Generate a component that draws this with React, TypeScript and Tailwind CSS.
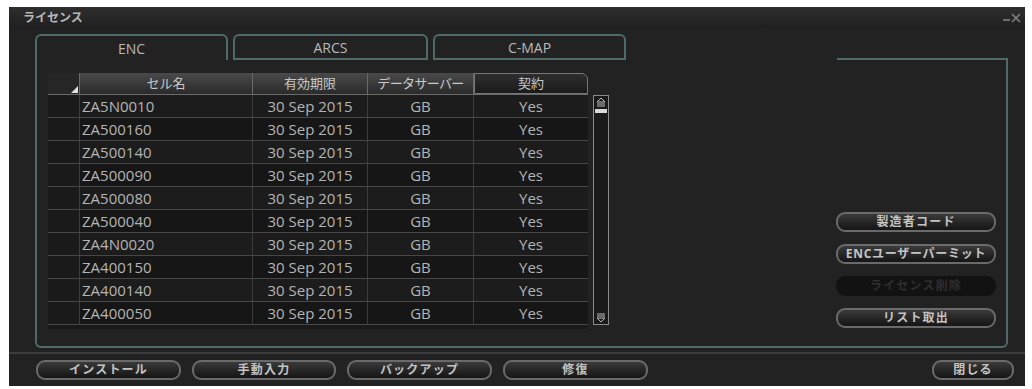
import React from 'react';

type Row = { cell: string, date: string, server: string, contract: string }

const rows: Array<Row> = [
  'ZA5N0010', 'ZA500160', 'ZA500140', 'ZA500090', 'ZA500080',
  'ZA500040', 'ZA4N0020', 'ZA400150', 'ZA400140', 'ZA400050',
].map((cell) => ({ cell, date: '30 Sep 2015', server: 'GB', contract: 'Yes' }))

const font = { fontFamily: '"Open Sans", "Noto Sans CJK JP", sans-serif' }

const PillButton = (props: { label: string, className?: string, disabled?: boolean }) => {
  const base = 'h-[20px] flex items-center justify-center rounded-[9px] text-[12px] font-bold whitespace-nowrap overflow-hidden'
  const normal = ' border-2 border-[#6a6a6a] bg-gradient-to-b from-[#3a3a3a] to-[#151515] text-[#c4c4c4]'
  const disabled = ' bg-[#121212] text-[#2e2e2e]'
  return <div className={base + (props.disabled ? disabled : normal) + ' ' + (props.className ?? '')}>
    {props.label}
  </div>
}

const TableHeader = () => {
  const cell = 'h-[21px] flex items-center justify-center text-[13px] text-[#c8c8c8] border-r border-[#6a6a6a] bg-gradient-to-b from-[#4a4a4a] to-[#2a2a2a]'
  return <div className="flex border-b border-[#6a6a6a]">
    <div className="w-[32px] h-[21px] relative bg-[#262626] border-r border-[#6a6a6a]">
      <div className="absolute right-[1px] bottom-[1px] w-0 h-0 border-l-[7px] border-l-transparent border-b-[7px] border-b-[#e0e0e0]" />
    </div>
    <div className={cell + ' w-[173px]'}>セル名</div>
    <div className={cell + ' w-[115px]'}>有効期限</div>
    <div className={cell + ' w-[106px] tracking-tighter'}>データサーバー</div>
    <div className="h-[21px] w-[114px] flex items-center justify-center text-[13px] text-[#c8c8c8] bg-gradient-to-b from-[#2e2e2e] to-[#1a1a1a] border border-[#777] rounded-tr-[6px]">契約</div>
  </div>
}

const TableRow = (props: { row: Row, index: number }) => {
  const bg = props.index % 2 === 0 ? 'bg-[#1c1c1c]' : 'bg-[#161616]'
  const cell = 'h-[22px] flex items-center text-[15px] text-[#b4b4b4] border-r border-[#3c3c3c]'
  return <div className={'flex border-b border-[#474747] ' + bg}>
    <div className="w-[32px] h-[22px] border-r border-[#3c3c3c] bg-[#1a1a1a]" />
    <div className={cell + ' w-[173px] pl-[2px]'}>{props.row.cell}</div>
    <div className={cell + ' w-[115px] justify-center'}>{props.row.date}</div>
    <div className={cell + ' w-[106px] justify-center'}>{props.row.server}</div>
    <div className={cell + ' w-[114px] justify-center border-r-0'}>{props.row.contract}</div>
  </div>
}

const ScrollBar = () => {
  return <div className="w-[16px] h-[230px] mt-[22px] ml-[5px] border border-[#8a8a8a] bg-[#1a1a1a] flex flex-col items-center justify-between py-[2px]">
    <div className="flex flex-col items-center gap-[2px]">
      <svg width="10" height="9" viewBox="0 0 10 9">
        <path d="M5 0 L9 4 L1 4 Z" fill="none" stroke="#bdbdbd" strokeWidth="1" />
        <line x1="1" y1="6" x2="9" y2="6" stroke="#bdbdbd" strokeWidth="1" />
        <line x1="1" y1="8" x2="9" y2="8" stroke="#bdbdbd" strokeWidth="1" />
      </svg>
      <div className="w-[12px] h-[4px] bg-[#d8d8d8]" />
    </div>
    <svg width="10" height="9" viewBox="0 0 10 9">
      <line x1="1" y1="1" x2="9" y2="1" stroke="#bdbdbd" strokeWidth="1" />
      <line x1="1" y1="3" x2="9" y2="3" stroke="#bdbdbd" strokeWidth="1" />
      <path d="M1 5 L9 5 L5 9 Z" fill="none" stroke="#bdbdbd" strokeWidth="1" />
    </svg>
  </div>
}

export default function App() {
  const tab = 'h-[26px] flex items-center justify-center text-[14px] text-[#b8b8b8] rounded-t-[6px] border-[#4e6a6a]'
  return <div className="w-[1032px] h-[389px] bg-white pt-[7px] pl-[9px]" style={font}>
    <div className="w-[1016px] h-[379px] bg-[#222222] flex flex-col">
      <div className="h-[21px] flex items-center justify-between pl-[14px] pr-[4px] bg-gradient-to-b from-[#2e2e2e] to-[#1f1f1f]">
        <span className="text-[12px] font-bold text-[#b8b8b8]">ライセンス</span>
        <div className="flex items-end gap-[1px] text-[#6e6e6e]">
          <div className="w-[7px] h-[2px] bg-[#6e6e6e] mb-[2px]" />
          <svg width="10" height="10" viewBox="0 0 10 10">
            <path d="M1 1 L9 9 M9 1 L1 9" stroke="#7a7a7a" strokeWidth="1.6" />
          </svg>
        </div>
      </div>

      <div className="ml-[26px] mt-[6px] w-[973px]">
        <div className="flex items-end">
          <div className={tab + ' w-[193px] border-l-2 border-t-2 border-r-2'}>ENC</div>
          <div className={tab + ' w-[195px] ml-[5px] border-2'}>ARCS</div>
          <div className={tab + ' w-[193px] ml-[5px] border-2'}>C-MAP</div>
          <div className="w-[211px]" />
          <div className="w-[171px] h-[2px] bg-[#4e6a6a] self-end" />
        </div>
        <div className="h-[288px] border-l-2 border-r-2 border-b-2 border-[#4e6a6a] rounded-b-[6px] flex">
          <div className="flex mt-[13px] ml-[11px]">
            <div className="flex flex-col w-[540px] h-[256px] bg-[#1a1a1a]">
              <TableHeader />
              {rows.map((row, index) => <TableRow key={row.cell} row={row} index={index} />)}
            </div>
            <ScrollBar />
          </div>
          <div className="flex-1 flex flex-col items-end justify-end gap-[12px] pr-[10px] pb-[18px]">
            <PillButton label="製造者コード" className="w-[160px] tracking-[0.1em]" />
            <PillButton label="ENCユーザーパーミット" className="w-[160px] tracking-[0.06em]" />
            <PillButton label="ライセンス削除" className="w-[160px] tracking-[0.1em]" disabled />
            <PillButton label="リスト取出" className="w-[160px] tracking-[0.1em]" />
          </div>
        </div>
      </div>

      <div className="mt-[4px] h-[2px] bg-[#3c3c3c]" />
      <div className="flex items-center mt-[6px] pl-[27px] pr-[11px]">
        <PillButton label="インストール" className="w-[145px] tracking-[0.1em]" />
        <PillButton label="手動入力" className="w-[144px] ml-[11px] tracking-[0.1em]" />
        <PillButton label="バックアップ" className="w-[145px] ml-[11px] tracking-[0.1em]" />
        <PillButton label="修復" className="w-[145px] ml-[11px] tracking-[0.1em]" />
        <div className="flex-1" />
        <PillButton label="閉じる" className="w-[82px] tracking-[0.1em]" />
      </div>
    </div>
  </div>
}
